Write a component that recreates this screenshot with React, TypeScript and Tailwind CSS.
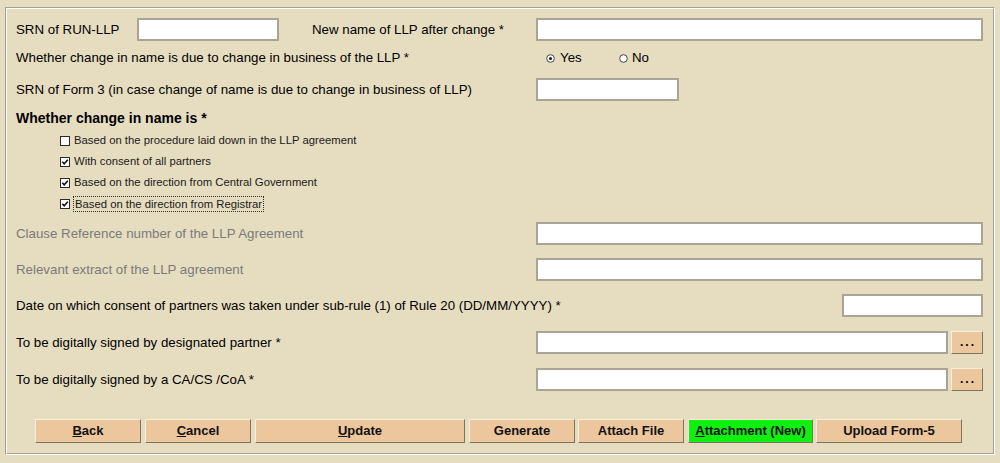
import React from "react";

const font = { fontFamily: '"Liberation Sans", Arial, sans-serif' };

function Input({ w }: { w: string }) {
  return <div className={`${w} h-[23px] bg-white border-2 border-[#a9a495] shrink-0`} />;
}

function Dots() {
  return (
    <div className="ml-[3px] w-[32px] h-[23px] bg-[#ecc69c] border border-t-[#f7eedc] border-l-[#f7eedc] border-b-[#7d7461] border-r-[#7d7461] flex items-center justify-center shrink-0">
      <span className="text-[12px] font-bold tracking-[2px] leading-none pb-[2px] pl-[2px]">...</span>
    </div>
  );
}

function Check({ checked }: { checked: boolean }) {
  return (
    <svg width="10" height="10" viewBox="0 0 10 10" className="shrink-0">
      <rect x="0.5" y="0.5" width="9" height="9" fill="#fff" stroke="#2b2b2b" />
      {checked && <path d="M2.3 4.8 L4.2 6.8 L7.8 2.8" fill="none" stroke="#111" strokeWidth="1.6" />}
    </svg>
  );
}

function Radio({ on }: { on: boolean }) {
  return (
    <svg width="9" height="9" viewBox="0 0 9 9" className="shrink-0">
      <circle cx="4.5" cy="4.5" r="3.8" fill="#fff" stroke="#333" strokeWidth="0.9" />
      {on && <circle cx="4.5" cy="4.5" r="1.6" fill="#222" />}
    </svg>
  );
}

function Btn({ w, children, green, ml }: { w: string; children: React.ReactNode; green?: boolean; ml: string }) {
  return (
    <div
      className={`${w} ${ml} h-[24px] ${green ? "bg-[#10f010]" : "bg-[#ecc69c]"} border border-t-[#f7eedc] border-l-[#f7eedc] border-b-[#7d7461] border-r-[#7d7461] flex items-center justify-center text-[13px] font-bold text-[#111] shrink-0`}
    >
      {children}
    </div>
  );
}

export default function App() {
  return (
    <div className="w-[1000px] h-[463px] bg-[#e6ddc0] overflow-hidden text-[13.3px] text-black" style={font}>
      <div className="ml-[5px] mt-[7px] w-[990px] h-[448px] border border-t-[#a6a08f] border-l-[#a6a08f] border-b-white border-r-white">
        <div className="w-full h-full border border-t-white border-l-white border-b-[#a6a08f] border-r-[#a6a08f] pl-[9px] pr-[9px] pt-[9px] flex flex-col">
          {/* Row 1 */}
          <div className="flex items-center h-[23px]">
            <span className="w-[121px]">SRN of RUN-LLP</span>
            <Input w="w-[142px]" />
            <span className="ml-[33px] w-[224px]">New name of LLP after change *</span>
            <Input w="w-[447px]" />
          </div>
          {/* Row 2 */}
          <div className="flex items-center h-[24px] mt-[5px]">
            <span className="w-[530px]">Whether change in name is due to change in business of the LLP *</span>
            <Radio on />
            <span className="ml-[5px] w-[59px]">Yes</span>
            <Radio on={false} />
            <span className="ml-[4px]">No</span>
          </div>
          {/* Row 3 */}
          <div className="flex items-center h-[23px] mt-[8px]">
            <span className="w-[520px]">SRN of Form 3 (in case change of name is due to change in business of LLP)</span>
            <Input w="w-[143px]" />
          </div>
          {/* Heading */}
          <div className="flex items-center h-[20px] mt-[7px] font-bold text-[14px]">Whether change in name is *</div>
          {/* Checkboxes */}
          <div className="flex flex-col pl-[44px] text-[11.3px] text-[#1a1a1a]">
            <div className="flex items-center h-[21px] mt-[2px] gap-[4px]">
              <Check checked={false} />
              <span>Based on the procedure laid down in the LLP agreement</span>
            </div>
            <div className="flex items-center h-[21px] gap-[4px]">
              <Check checked />
              <span>With consent of all partners</span>
            </div>
            <div className="flex items-center h-[21px] gap-[4px]">
              <Check checked />
              <span>Based on the direction from Central Government</span>
            </div>
            <div className="flex items-center h-[21px] gap-[3px]">
              <Check checked />
              <span className="border border-dotted border-[#333] px-[1px] leading-[14px]">Based on the direction from Registrar</span>
            </div>
          </div>
          {/* Clause */}
          <div className="flex items-center h-[23px] mt-[8px]">
            <span className="w-[520px] text-[#7a7a7a]">Clause Reference number of the LLP Agreement</span>
            <Input w="w-[447px]" />
          </div>
          <div className="flex items-center h-[23px] mt-[13px]">
            <span className="w-[520px] text-[#7a7a7a]">Relevant extract of the LLP agreement</span>
            <Input w="w-[447px]" />
          </div>
          <div className="flex items-center h-[23px] mt-[13px]">
            <span className="w-[826px]">Date on which consent of partners was taken under sub-rule (1) of Rule 20 (DD/MM/YYYY) *</span>
            <Input w="w-[141px]" />
          </div>
          <div className="flex items-center h-[23px] mt-[14px]">
            <span className="w-[520px]">To be digitally signed by designated partner *</span>
            <Input w="w-[412px]" />
            <Dots />
          </div>
          <div className="flex items-center h-[23px] mt-[14px]">
            <span className="w-[520px]">To be digitally signed by a CA/CS /CoA *</span>
            <Input w="w-[412px]" />
            <Dots />
          </div>
          {/* Buttons */}
          <div className="flex items-center mt-[28px] pl-[19px]">
            <Btn ml="ml-0" w="w-[106px]"><span><span className="underline">B</span>ack</span></Btn>
            <Btn ml="ml-[4px]" w="w-[106px]"><span><span className="underline">C</span>ancel</span></Btn>
            <Btn ml="ml-[4px]" w="w-[210px]"><span><span className="underline">U</span>pdate</span></Btn>
            <Btn ml="ml-[4px]" w="w-[106px]">Generate</Btn>
            <Btn ml="ml-[3px]" w="w-[106px]">Attach File</Btn>
            <Btn ml="ml-[4px]" w="w-[125px]" green><span><span className="underline">A</span>ttachment (New)</span></Btn>
            <Btn ml="ml-[3px]" w="w-[146px]">Upload Form-5</Btn>
          </div>
        </div>
      </div>
    </div>
  );
}
